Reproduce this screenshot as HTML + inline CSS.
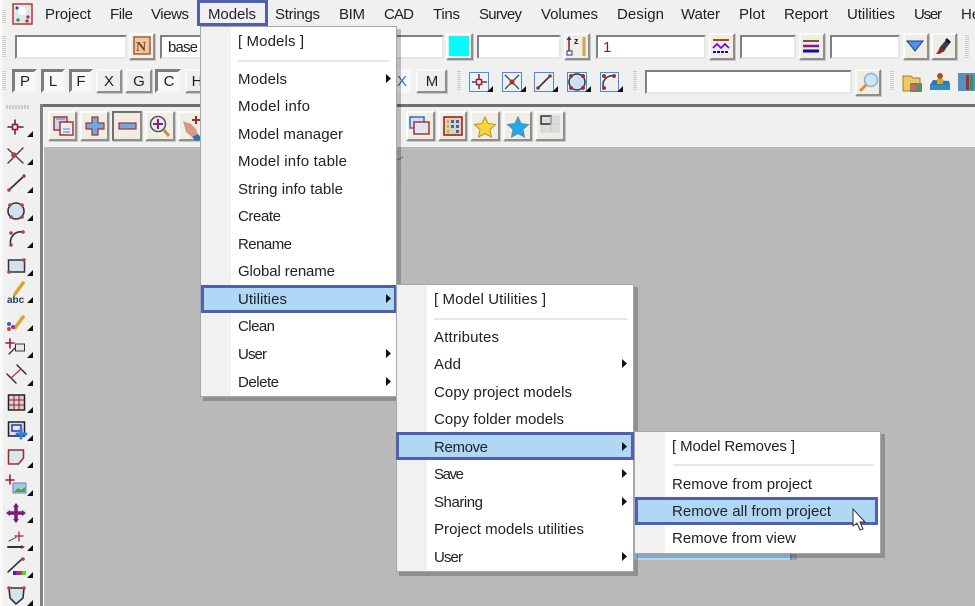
<!DOCTYPE html>
<html>
<head>
<meta charset="utf-8">
<style>
html,body{margin:0;padding:0;background:#f0f0f0;}
#p{position:relative;width:975px;height:606px;overflow:hidden;background:#f0f0f0;font-family:"Liberation Sans",sans-serif;filter:blur(.35px);}
.b,.i,.s{position:absolute;box-sizing:border-box;}
.b{background:#f0ede2;border:2px solid;border-color:#fafafa #8e8e8e #8e8e8e #fafafa;box-shadow:1px 1px 0 #c8c8c8;}
.g{background:#eeeeee;}
.s{background:#f8f8f8;border:3px solid;border-color:#7d7d7d #f6f6f6 #f6f6f6 #7d7d7d;}
.i{background:#fff;border:2px solid;border-color:#808080 #e6e6e6 #e6e6e6 #808080;}
svg{position:absolute;left:0;top:0;}
text{font-family:"Liberation Sans",sans-serif;font-size:15px;fill:#20202c;}
</style>
</head>
<body>
<div id="p">
<div style="position:absolute;left:44px;top:147px;width:931px;height:459px;background:#b9b9b9;"></div>
<div style="position:absolute;left:40px;top:104px;width:935px;height:3px;background:#6f6f6f;"></div>
<div style="position:absolute;left:40px;top:104px;width:3px;height:502px;background:#808080;"></div>
<div style="position:absolute;left:43px;top:107px;width:1px;height:499px;background:#fff;"></div>
<div style="position:absolute;left:0;top:0;width:3px;height:606px;background:#f8f8f8;"></div>

<div class="i" style="left:15px;top:35px;width:112px;height:24px;"></div>
<div class="b" style="left:129px;top:33px;width:26px;height:27px;"></div>
<div class="i" style="left:160px;top:35px;width:60px;height:24px;"></div>
<div class="i" style="left:380px;top:35px;width:64px;height:24px;"></div>
<div class="b" style="left:446px;top:33px;width:27px;height:27px;"></div>
<div class="i" style="left:477px;top:35px;width:84px;height:24px;"></div>
<div class="b" style="left:564px;top:33px;width:26px;height:27px;"></div>
<div class="i" style="left:596px;top:35px;width:110px;height:24px;"></div>
<div class="b" style="left:709px;top:33px;width:26px;height:27px;"></div>
<div class="i" style="left:740px;top:35px;width:56px;height:24px;"></div>
<div class="b" style="left:799px;top:33px;width:26px;height:27px;"></div>
<div class="i" style="left:830px;top:35px;width:70px;height:24px;"></div>
<div class="b" style="left:903px;top:33px;width:26px;height:27px;"></div>
<div class="b" style="left:931px;top:33px;width:26px;height:27px;"></div>

<div class="s" style="left:12px;top:69px;width:25px;height:24px;"></div>
<div class="s" style="left:41px;top:69px;width:24px;height:24px;"></div>
<div class="s" style="left:69px;top:69px;width:24px;height:24px;"></div>
<div class="b g" style="left:96px;top:69px;width:26px;height:24px;"></div>
<div class="b g" style="left:125px;top:69px;width:27px;height:24px;"></div>
<div class="s" style="left:155px;top:69px;width:26px;height:24px;"></div>
<div class="b g" style="left:185px;top:69px;width:26px;height:24px;"></div>
<div style="position:absolute;left:385px;top:69px;width:26px;height:24px;background:#f8f8f8;"></div>
<div class="b g" style="left:416px;top:69px;width:31px;height:24px;"></div>
<div class="i" style="left:645px;top:70px;width:207px;height:24px;"></div>
<div class="b" style="left:855px;top:69px;width:26px;height:27px;"></div>

<div class="b" style="left:48px;top:111px;width:29px;height:30px;"></div>
<div class="b" style="left:80px;top:111px;width:29px;height:30px;"></div>
<div class="b" style="left:112px;top:111px;width:30px;height:30px;border-color:#707070 #8e8e8e #8e8e8e #707070;"></div>
<div class="b" style="left:145px;top:111px;width:30px;height:30px;"></div>
<div class="b" style="left:178px;top:111px;width:30px;height:30px;"></div>
<div class="b" style="left:406px;top:111px;width:29px;height:30px;"></div>
<div class="b" style="left:438px;top:111px;width:29px;height:30px;"></div>
<div class="b" style="left:470px;top:111px;width:30px;height:30px;"></div>
<div class="b" style="left:503px;top:111px;width:29px;height:30px;"></div>
<div class="b" style="left:535px;top:111px;width:30px;height:30px;"></div>

<svg width="975" height="606" viewBox="0 0 975 606">
<!-- grippers -->
<g stroke="#a8a8a8" stroke-width="1" stroke-dasharray="1 1" fill="none">
<path d="M3 10v14M5 10v14M3 36v22M5 36v22M3 71v20M5 71v20"/>
<path d="M458 71v20M460 71v20M634 71v20M636 71v20M891 71v20M893 71v20M966 35v24M968 35v24"/>
<path d="M6 106h24M6 108h24" stroke-dasharray="2 1"/>
</g>
<!-- app logo -->
<rect x="13" y="4" width="19" height="20" fill="#dfe8e8" stroke="#c03030" stroke-width="1.500"/>
<circle cx="22" cy="11" r="4" fill="#fff"/><circle cx="17" cy="8" r="1.500" fill="#3040a0"/><circle cx="28" cy="17" r="1.600" fill="#8030a0"/><circle cx="18" cy="20" r="1.600" fill="#209040"/><circle cx="27" cy="21" r="1.600" fill="#d02020"/>

<!-- menu bar -->
<text x="45" y="19" textLength="46">Project</text>
<text x="110" y="19" textLength="23">File</text>
<text x="151" y="19" textLength="38">Views</text>
<text x="275" y="19" textLength="45">Strings</text>
<text x="339" y="19" textLength="26">BIM</text>
<text x="384" y="19" textLength="30">CAD</text>
<text x="433" y="19" textLength="27">Tins</text>
<text x="479" y="19" textLength="43">Survey</text>
<text x="541" y="19" textLength="57">Volumes</text>
<text x="617" y="19" textLength="47">Design</text>
<text x="681" y="19" textLength="39">Water</text>
<text x="739" y="19" textLength="26">Plot</text>
<text x="784" y="19" textLength="44">Report</text>
<text x="847" y="19" textLength="48">Utilities</text>
<text x="914" y="19" textLength="28">User</text>
<text x="961" y="19">Help</text>

<!-- row 1 -->
<rect x="134" y="37" width="16" height="17" fill="#e8c8a8" stroke="#b05020" stroke-width="1.400"/>
<text x="136" y="51" style="font-family:'Liberation Serif',serif;font-weight:bold;font-size:14px;fill:#8c3c14;">N</text>
<text x="168" y="52" textLength="30">base</text>
<rect x="449" y="36" width="20" height="20" fill="#00ffff"/>
<path d="M569 38v15" stroke="#a02030" stroke-width="1.600"/><path d="M569 36l-2.500 4h5z" fill="#2040a0"/><rect x="567" y="51" width="5" height="4" fill="#fff" stroke="#2030a0"/>
<text x="574" y="44" style="font-size:9px;font-weight:bold;fill:#222;">z</text>
<path d="M584 37v19" stroke="#c8a850" stroke-width="3"/>
<text x="603" y="52" style="fill:#7a2038;">1</text>
<path d="M713 40h16" stroke="#a05020" stroke-width="2"/><path d="M713 48l4-4 4 4 4-4 4 4" stroke="#7010e0" stroke-width="1.800" fill="none"/><path d="M713 52h16" stroke="#1010a0" stroke-width="2" stroke-dasharray="3 1"/>
<path d="M803 41h16" stroke="#6a5a50" stroke-width="2"/><path d="M803 46h16" stroke="#901090" stroke-width="2.500"/><path d="M803 51h16" stroke="#101090" stroke-width="3"/>
<path d="M907 41h16l-8 10z" fill="#5090e0" stroke="#1838a0"/>
<path d="M937 54l3-7 6-7 4 3-6 8z" fill="#304050"/><path d="M936 54l5-6 4 3-6 3z" fill="#a02020"/><path d="M947 38l4 4-2 2-4-4z" fill="#101828"/>

<!-- row 2 letters -->
<g style="text-anchor:middle">
<text x="25" y="86">P</text><text x="53" y="86">L</text><text x="81" y="86">F</text><text x="109" y="86">X</text><text x="139" y="86">G</text><text x="169" y="86">C</text><text x="197" y="86">H</text><text x="432" y="86">M</text>
</g>
<text x="397" y="86" style="fill:#2a70d8;">X</text>
<!-- snap icons -->
<g fill="none">
<rect x="469.500" y="72.500" width="19" height="19" stroke="#3f8ff0"/><rect x="502.500" y="72.500" width="19" height="19" stroke="#3f8ff0"/><rect x="534.500" y="72.500" width="19" height="19" stroke="#3f8ff0"/><rect x="567.500" y="72.500" width="19" height="19" stroke="#3f8ff0"/><rect x="600.500" y="72.500" width="18" height="19" stroke="#3f8ff0"/>
<path d="M479 74v15M472 82h15" stroke="#222" stroke-width="1.300"/><rect x="476.500" y="79.500" width="5" height="5" fill="#fff" stroke="#a02030" stroke-width="1.500"/>
<path d="M505 75l14 14M519 75l-14 14" stroke="#444" stroke-width="1.300"/><circle cx="512" cy="82" r="2.500" fill="#a03040"/>
<path d="M537 89l14-14" stroke="#333" stroke-width="1.600"/><circle cx="538" cy="88" r="1.800" fill="#a03040"/><circle cx="550" cy="76" r="1.800" fill="#a03040"/>
<circle cx="577" cy="82" r="8" fill="#cfe0f0" stroke="#333" stroke-width="1.500"/><circle cx="571" cy="76" r="2" fill="#a03040"/><circle cx="583" cy="76" r="2" fill="#a03040"/><circle cx="571" cy="88" r="2" fill="#a03040"/><circle cx="583" cy="88" r="2" fill="#a03040"/>
<path d="M604 89a9 9 0 0 1 10-13" stroke="#333" stroke-width="1.500"/><circle cx="604" cy="76" r="2" fill="#a03040"/><circle cx="614" cy="76" r="2" fill="#a03040"/><circle cx="604" cy="88" r="2" fill="#a03040"/>
</g>
<path d="M487 92h6v-6zM520 92h6v-6zM552 92h6v-6zM585 92h6v-6zM617 92h6v-6z" fill="#111"/>
<!-- magnifier -->
<circle cx="871" cy="80" r="6.500" fill="#cfe6fa" stroke="#8fb0d0" stroke-width="1.500"/><path d="M866 85l-6 6" stroke="#e09030" stroke-width="3"/>
<!-- right icons -->
<path d="M903 76h8l2 2h7v13h-17z" fill="#f0c860" stroke="#a08030"/><rect x="910" y="83" width="12" height="9" fill="#688868"/><rect x="911" y="85" width="5" height="5" fill="#e06060"/>
<path d="M930 84h20v6h-20z" fill="#3888c0"/><path d="M933 80l16 1 1 4-20 0z" fill="#2c78b0"/><circle cx="940" cy="76" r="3" fill="#a05030"/><rect x="937" y="79" width="6" height="5" fill="#e0a020"/>
<rect x="958" y="73" width="17" height="18" fill="#5a8fc0"/><rect x="966" y="75" width="3" height="15" fill="#a03030"/><rect x="970" y="75" width="3" height="15" fill="#40904a"/>

<!-- toolbar 3 -->
<rect x="54" y="117" width="13" height="13" fill="#c8d8e8" stroke="#a02828" stroke-width="1.400"/><rect x="60" y="122" width="13" height="13" fill="#e8eef4" stroke="#a02828" stroke-width="1.400"/><path d="M56 119h9M63 129h7M63 132h7" stroke="#5080c0"/>
<path d="M92 117h6v6h6v6h-6v6h-6v-6h-6v-6h6z" fill="#70a8e0" stroke="#a83030" stroke-width="1.200"/>
<rect x="119" y="123" width="17" height="6" fill="#70a8e0" stroke="#a83030" stroke-width="1.200"/>
<circle cx="158" cy="124" r="7.500" fill="#e4e8f4" stroke="#555" stroke-width="1.500"/><path d="M158 119v10M153 124h10" stroke="#8a2070" stroke-width="2"/><path d="M164 130l5 6" stroke="#c89040" stroke-width="3"/>
<path d="M183 121l8 3 5 5 2 6-6 2-6-5z" fill="#d89888"/><path d="M192 137l6-3 4 5-6 2z" fill="#3070b0"/><path d="M196 116v8M192 120h8" stroke="#a02828" stroke-width="2"/>
<rect x="410" y="117" width="14" height="11" fill="#d0e0f0" stroke="#3060c0" stroke-width="1.400"/><rect x="414" y="122" width="15" height="12" fill="#dfe6ee" stroke="#a02828" stroke-width="1.400"/>
<rect x="444" y="117" width="18" height="18" fill="#d8d4c0" stroke="#a02020" stroke-width="1.600"/><path d="M451 120h3v3h-3zM456 120h3v3h-3zM451 125h3v3h-3zM456 125h3v3h-3zM456 130h3v3h-3z" fill="#3868a8"/><path d="M447 120h2v3h-2zM447 125h2v3h-2zM447 130h2v3h-2z" fill="#d8a820"/>
<path d="M485 117l3 6.500 7.500 1-5.500 5 1.500 7.500-6.500-3.500-6.500 3.500 1.500-7.500-5.500-5 7.500-1z" fill="#f8d838" stroke="#b89030"/>
<path d="M518 117l3 6.500 7.500 1-5.500 5 1.500 7.500-6.500-3.500-6.500 3.500 1.500-7.500-5.500-5 7.500-1z" fill="#20a8e8" stroke="#5890b0"/>
<rect x="541" y="116" width="18" height="16" fill="#dcdcdc" stroke="#cfcfcf"/><rect x="541" y="116" width="10" height="8" fill="none" stroke="#333" stroke-width="1.500"/><path d="M551 124h8M551 116v16" stroke="#c8c8c8"/>

<!-- left toolbar -->
<g fill="none" stroke-linecap="round">
<path d="M15 120v14M8 127h15" stroke="#333" stroke-width="1.500"/><rect x="12.500" y="124.500" width="5" height="5" fill="#f4e8e8" stroke="#a01830" stroke-width="1.600"/>
<path d="M8 149l15 14M23 148l-15 15" stroke="#444" stroke-width="1.500"/><circle cx="14" cy="155" r="2.800" fill="#b04050"/>
<path d="M9 190l15-14" stroke="#333" stroke-width="1.800"/><circle cx="9" cy="190" r="1.800" fill="#b04050"/><circle cx="24" cy="176" r="1.800" fill="#b04050"/>
<circle cx="16" cy="211" r="8" fill="#d4e2ef" stroke="#333" stroke-width="1.600"/><circle cx="10" cy="205" r="1.800" fill="#b04050"/><circle cx="22" cy="205" r="1.800" fill="#b04050"/><circle cx="11" cy="217" r="1.800" fill="#b04050"/><circle cx="22" cy="217" r="1.800" fill="#b04050"/>
<path d="M11 245a10 10 0 0 1 11-13" stroke="#333" stroke-width="1.600"/><circle cx="11" cy="233" r="1.800" fill="#b04050"/><circle cx="23" cy="232" r="1.800" fill="#b04050"/><circle cx="11" cy="245" r="1.800" fill="#b04050"/>
<rect x="8.500" y="260" width="16" height="12" fill="#d4e2ef" stroke="#333" stroke-width="1.500"/><circle cx="9" cy="272" r="1.800" fill="#b04050"/><circle cx="24" cy="260" r="1.800" fill="#b04050"/>
<path d="M15 294l8-11" stroke="#d8a828" stroke-width="3.500"/>
<path d="M15 328l8-11" stroke="#d8a828" stroke-width="3.500"/><circle cx="9" cy="324" r="2" fill="#3060d0"/><circle cx="13" cy="327" r="2" fill="#a020c0"/><circle cx="9" cy="329" r="2" fill="#e04020"/>
<path d="M10 339v9M6 343h8" stroke="#a01830" stroke-width="1.600"/><path d="M9 354l6-6" stroke="#333" stroke-width="1.300"/><rect x="15.500" y="344" width="9" height="7" fill="#e0e8f0" stroke="#333"/>
<path d="M7 374l9 9M17 365l9 9" stroke="#333" stroke-width="1.500"/><path d="M11 378l10-9" stroke="#c03040" stroke-width="1.300"/>
<rect x="8.500" y="395" width="16" height="15" fill="#e8ccd0" stroke="#222" stroke-width="1.500"/><path d="M9 400h15M9 405h15M14 395v15M19 395v15" stroke="#802030"/>
<rect x="8.500" y="422" width="16" height="14" fill="#d4e2ef" stroke="#222" stroke-width="1.500"/><rect x="12" y="425" width="9" height="6" fill="#e8e8f8" stroke="#2028a0" stroke-width="1.400"/><path d="M21 429v9M17 434h9" stroke="#3080e0" stroke-width="3"/>
<path d="M8.500 450h15v8l-5 6h-10z" fill="#d8e6ee" stroke="#a02830" stroke-width="1.500"/>
<path d="M10 475v9M6 480h8" stroke="#a02030" stroke-width="1.600"/><rect x="13" y="483" width="13" height="10" fill="#a8c8e0" stroke="#7080c0"/><path d="M14 492l4-4 3 2 4-3v5z" fill="#50a040"/>
<path d="M16 506v14M9 513h14" stroke="#7c1c78" stroke-width="3.500"/><path d="M16 503l-3 4h6zM16 523l-3-4h6zM6 513l4-3v6zM26 513l-4-3v6z" fill="#7c1c78"/>
<path d="M19 532v9M15 536h8" stroke="#a02030" stroke-width="1.200"/><path d="M9 541l8-4" stroke="#444" stroke-dasharray="2 1"/><path d="M8 547h15" stroke="#333" stroke-width="2"/><path d="M21 545l4 2-4 2z" fill="#a02030"/>
<path d="M8 572l14-13" stroke="#333" stroke-width="1.600"/><circle cx="23" cy="559" r="1.800" fill="#b04050"/><rect x="13" y="571" width="3" height="4" fill="#2030d0"/><rect x="16" y="571" width="3" height="4" fill="#a020c0"/><rect x="19" y="571" width="3" height="4" fill="#e03020"/><rect x="22" y="571" width="4" height="4" fill="#30e030"/>
<path d="M9 588h15l-1 10-7 6-6-6z" fill="#d4e4ea" stroke="#333" stroke-width="1.600"/><circle cx="9" cy="588" r="1.800" fill="#b04050"/><circle cx="24" cy="588" r="1.800" fill="#b04050"/>
</g>
<text x="7" y="303" style="font-size:10px;font-weight:bold;fill:#204060;">abc</text>
<path d="M27 137h6v-6zM27 165h6v-6zM27 193h6v-6zM27 221h6v-6zM27 248h6v-6zM27 276h6v-6zM27 303h6v-6zM27 331h6v-6zM27 358h6v-6zM27 386h6v-6zM27 413h6v-6zM27 441h6v-6zM27 468h6v-6zM27 496h6v-6zM27 523h6v-6zM27 551h6v-6zM27 578h6v-6zM27 606h6v-6z" fill="#111"/>

<!-- remnants behind menus -->
<path d="M397 150h4v4h-4zM397 168h5v3h-5zM397 178h4v8h-4z" fill="#a8b8c8"/>
<path d="M397 160l6-3" stroke="#c05050"/>
<rect x="634" y="554" width="156" height="6" fill="#b0d8f4"/><rect x="790" y="554" width="2" height="6" fill="#5898d8"/>
<rect x="792" y="554" width="5" height="6" fill="#8a8a8a" opacity=".5"/>

<!-- menu 1 -->
<rect x="203" y="29" width="198" height="372" fill="#000" opacity=".22"/>
<rect x="200.500" y="26.500" width="196" height="370" fill="#fff" stroke="#a6a6a6"/>
<rect x="201" y="27" width="30" height="369" fill="#f1f1f1"/>
<path d="M238 61h151" stroke="#cfcfcf"/>
<text x="238" y="46" textLength="66">[ Models ]</text>
<text x="238" y="84" textLength="49">Models</text>
<text x="238" y="111" textLength="72">Model info</text>
<text x="238" y="139" textLength="105">Model manager</text>
<text x="238" y="166" textLength="109">Model info table</text>
<text x="238" y="194" textLength="105">String info table</text>
<text x="238" y="221" textLength="43">Create</text>
<text x="238" y="249" textLength="54">Rename</text>
<text x="238" y="276" textLength="97">Global rename</text>
<rect x="202.500" y="286.500" width="193" height="25" fill="#b0d7f3" stroke="#5060ae" stroke-width="3"/>
<text x="238" y="304" textLength="49">Utilities</text>
<text x="238" y="331" textLength="37">Clean</text>
<text x="238" y="359" textLength="29">User</text>
<text x="238" y="387" textLength="41">Delete</text>
<path d="M386 74l5 4.500-5 4.500zM386 294l5 4.500-5 4.500zM386 349l5 4.500-5 4.500zM386 377l5 4.500-5 4.500z" fill="#111"/>

<!-- menu 2 -->
<rect x="399" y="287" width="239" height="289" fill="#000" opacity=".22"/>
<rect x="396.500" y="284.500" width="237" height="287" fill="#fff" stroke="#a6a6a6"/>
<rect x="397" y="285" width="30" height="286" fill="#f1f1f1"/>
<path d="M434 319h193" stroke="#cfcfcf"/>
<text x="434" y="304" textLength="112">[ Model Utilities ]</text>
<text x="434" y="342" textLength="65">Attributes</text>
<text x="434" y="369" textLength="27">Add</text>
<text x="434" y="397" textLength="138">Copy project models</text>
<text x="434" y="424" textLength="130">Copy folder models</text>
<rect x="397.500" y="433.500" width="235" height="25" fill="#b0d7f3" stroke="#5060ae" stroke-width="3"/>
<text x="434" y="452" textLength="54">Remove</text>
<text x="434" y="479" textLength="30">Save</text>
<text x="434" y="507" textLength="49">Sharing</text>
<text x="434" y="534" textLength="150">Project models utilities</text>
<text x="434" y="562" textLength="29">User</text>
<path d="M622 359l5 4.500-5 4.500zM622 442l5 4.500-5 4.500zM622 469l5 4.500-5 4.500zM622 497l5 4.500-5 4.500zM622 552l5 4.500-5 4.500z" fill="#111"/>

<!-- menu 3 -->
<rect x="637" y="434" width="248" height="124" fill="#000" opacity=".22"/>
<rect x="634.500" y="431.500" width="246" height="122" fill="#fff" stroke="#a6a6a6"/>
<rect x="635" y="432" width="30" height="121" fill="#f1f1f1"/>
<path d="M673 465h201" stroke="#cfcfcf"/>
<text x="672" y="451" textLength="123">[ Model Removes ]</text>
<text x="672" y="489" textLength="140">Remove from project</text>
<rect x="636.500" y="498.500" width="240" height="25" fill="#b0d7f3" stroke="#5060ae" stroke-width="3"/>
<text x="672" y="516" textLength="159">Remove all from project</text>
<text x="672" y="543" textLength="124">Remove from view</text>
<!-- cursor -->
<path d="M853 509v17l4-3 3 7 3-1-3-7h5z" fill="#fff" stroke="#333" stroke-width="1"/>

<!-- Models highlight -->
<rect x="198.500" y="1.500" width="68" height="23" fill="#f0f0f0" stroke="#5060ae" stroke-width="3"/>
<text x="208" y="19" textLength="48">Models</text>
</svg>
</div>
</body>
</html>
